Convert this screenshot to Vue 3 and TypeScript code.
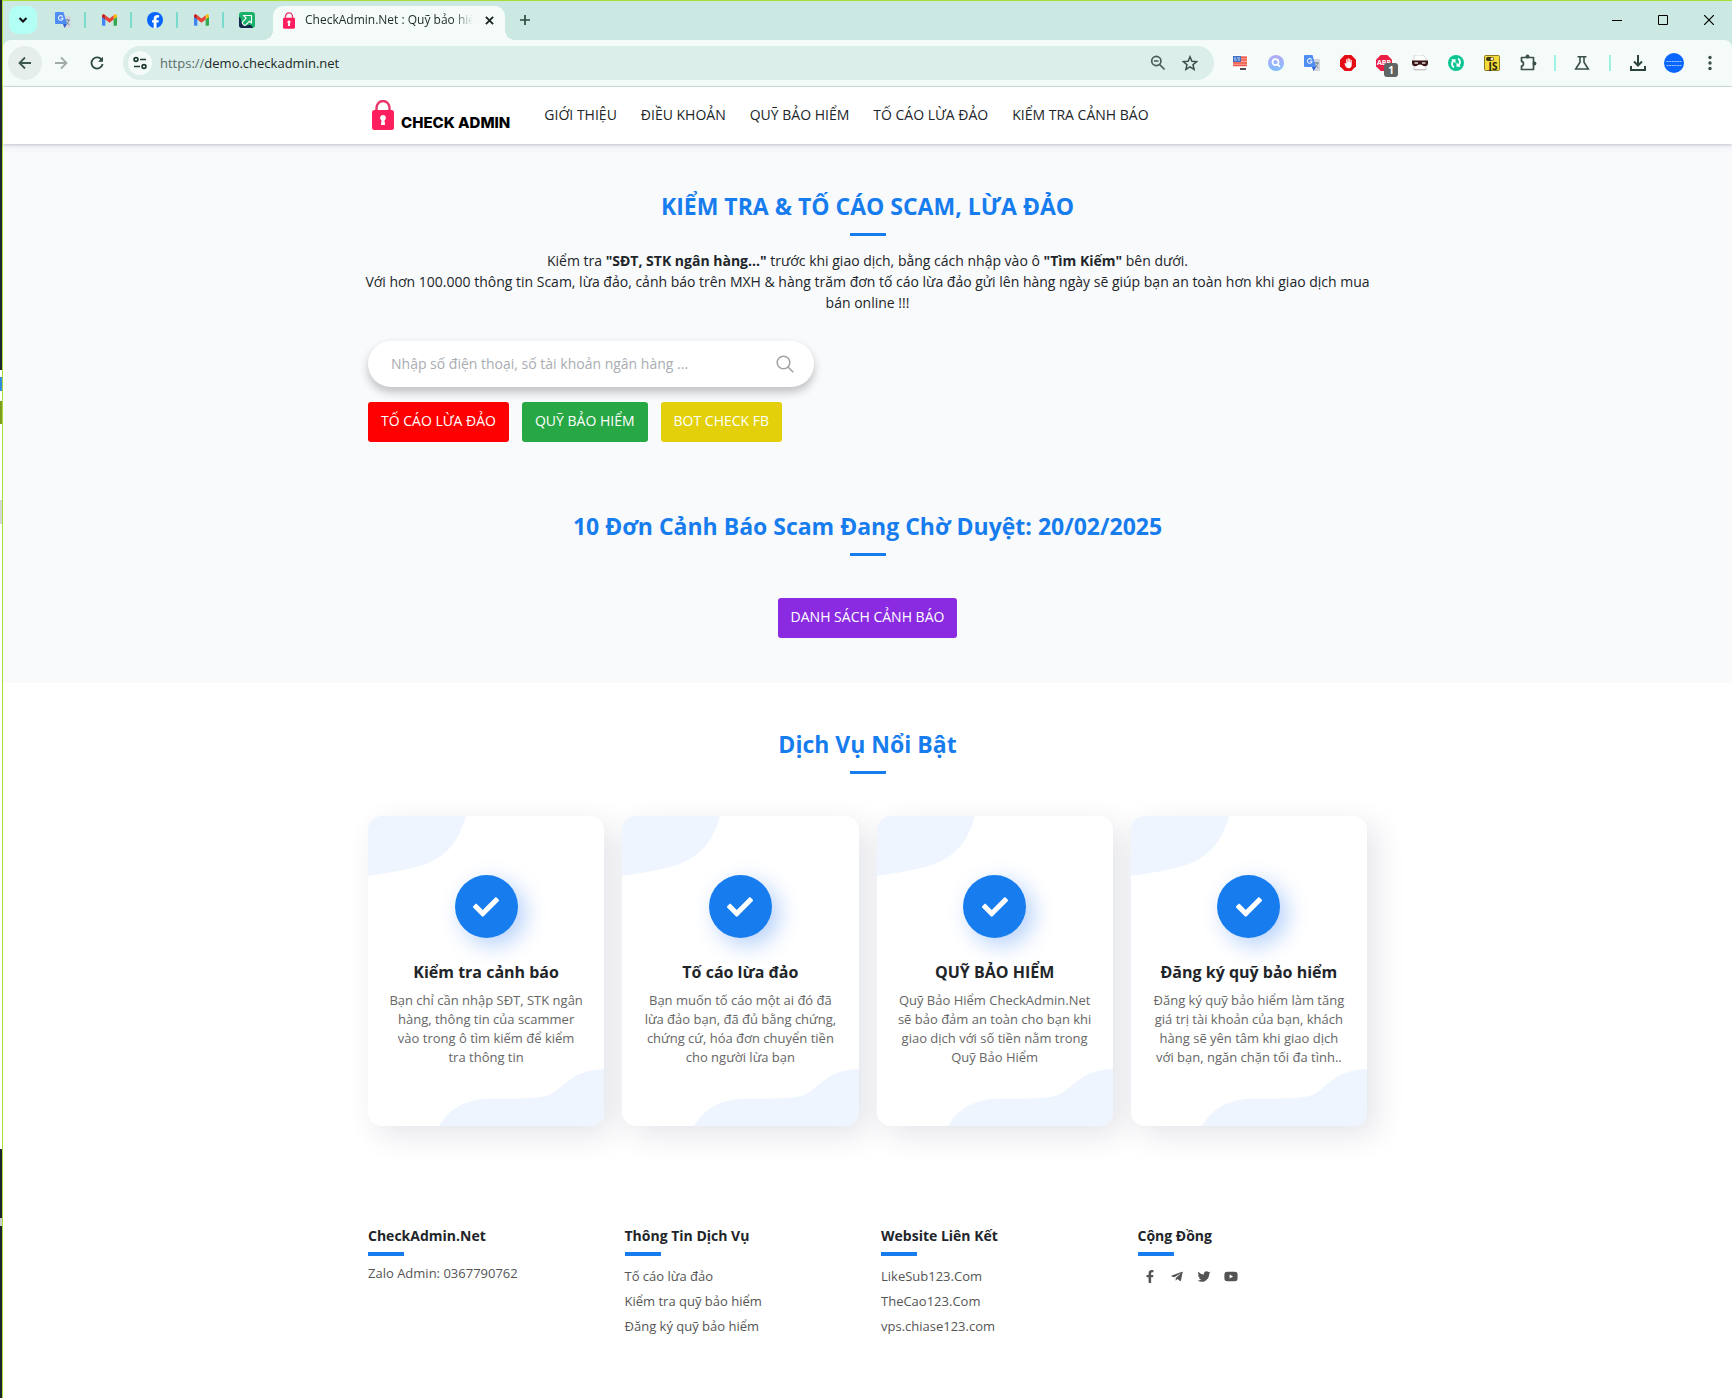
<script setup lang="ts">
import { ref } from 'vue'

interface LinkItem {
  label: string
  href: string
}

interface Service {
  title: string
  text: string
}

const query = ref('')

const navLinks: LinkItem[] = [
  { label: 'GIỚI THIỆU', href: '#gioi-thieu' },
  { label: 'ĐIỀU KHOẢN', href: '#dieu-khoan' },
  { label: 'QUỸ BẢO HIỂM', href: '#quy-bao-hiem' },
  { label: 'TỐ CÁO LỪA ĐẢO', href: '#to-cao' },
  { label: 'KIỂM TRA CẢNH BÁO', href: '#canh-bao' },
]

const services: Service[] = [
  {
    title: 'Kiểm tra cảnh báo',
    text: 'Bạn chỉ cần nhập SĐT, STK ngân hàng, thông tin của scammer vào trong ô tìm kiếm để kiểm tra thông tin',
  },
  {
    title: 'Tố cáo lừa đảo',
    text: 'Bạn muốn tố cáo một ai đó đã lừa đảo bạn, đã đủ bằng chứng, chứng cứ, hóa đơn chuyển tiền cho người lừa bạn',
  },
  {
    title: 'QUỸ BẢO HIỂM',
    text: 'Quỹ Bảo Hiểm CheckAdmin.Net sẽ bảo đảm an toàn cho bạn khi giao dịch với số tiền nằm trong Quỹ Bảo Hiểm',
  },
  {
    title: 'Đăng ký quỹ bảo hiểm',
    text: 'Đăng ký quỹ bảo hiểm làm tăng giá trị tài khoản của bạn, khách hàng sẽ yên tâm khi giao dịch với bạn, ngăn chặn tối đa tình..',
  },
]

const serviceLinks: LinkItem[] = [
  { label: 'Tố cáo lừa đảo', href: '#to-cao' },
  { label: 'Kiểm tra quỹ bảo hiểm', href: '#quy-bao-hiem' },
  { label: 'Đăng ký quỹ bảo hiểm', href: '#dang-ky' },
]

const partnerLinks: LinkItem[] = [
  { label: 'LikeSub123.Com', href: '#likesub' },
  { label: 'TheCao123.Com', href: '#thecao' },
  { label: 'vps.chiase123.com', href: '#vps' },
]

const socials = [
  {
    name: 'Facebook',
    box: '0 0 320 512',
    path: 'M279.14 288l14.22-92.66h-88.91v-60.13c0-25.35 12.42-50.06 52.24-50.06h40.42V6.26S260.43 0 225.36 0c-73.22 0-121.08 44.38-121.08 124.72v70.62H22.89V288h81.39v224h100.17V288z',
  },
  {
    name: 'Telegram',
    box: '0 0 448 512',
    path: 'M446.7 98.6l-67.6 318.8c-5.1 22.5-18.4 28.1-37.3 17.5l-103-75.9-49.7 47.8c-5.5 5.5-10.1 10.1-20.7 10.1l7.4-104.9 190.9-172.5c8.3-7.4-1.8-11.5-12.9-4.1L117.8 284 16.2 252.2c-22.1-6.9-22.5-22.1 4.6-32.7L418.2 66.4c18.4-6.9 34.5 4.1 28.5 32.2z',
  },
  {
    name: 'Twitter',
    box: '0 0 512 512',
    path: 'M459.37 151.716c.325 4.548.325 9.097.325 13.645 0 138.72-105.583 298.558-298.558 298.558-59.452 0-114.68-17.219-161.137-47.106 8.447.974 16.568 1.299 25.34 1.299 49.055 0 94.213-16.568 130.274-44.832-46.132-.975-84.792-31.188-98.112-72.772 6.498.974 12.995 1.624 19.818 1.624 9.421 0 18.843-1.3 27.614-3.573-48.081-9.747-84.143-51.98-84.143-102.985v-1.299c13.969 7.797 30.214 12.67 47.431 13.319-28.264-18.843-46.781-51.005-46.781-87.391 0-19.492 5.197-37.36 14.294-52.954 51.655 63.675 129.3 105.258 216.365 109.807-1.624-7.797-2.599-15.918-2.599-24.04 0-57.828 46.782-104.934 104.934-104.934 30.213 0 57.502 12.67 76.67 33.137 23.715-4.548 46.456-13.32 66.599-25.34-7.798 24.366-24.366 44.833-46.132 57.827 21.117-2.273 41.584-8.122 60.426-16.243-14.292 20.791-32.161 39.308-52.628 54.253z',
  },
  {
    name: 'YouTube',
    box: '0 0 576 512',
    path: 'M549.655 124.083c-6.281-23.65-24.787-42.276-48.284-48.597C458.781 64 288 64 288 64S117.22 64 74.629 75.486c-23.497 6.322-42.003 24.947-48.284 48.597-11.412 42.867-11.412 132.305-11.412 132.305s0 89.438 11.412 132.305c6.281 23.65 24.787 41.5 48.284 47.821C117.22 448 288 448 288 448s170.78 0 213.371-11.486c23.497-6.321 42.003-24.171 48.284-47.821 11.412-42.867 11.412-132.305 11.412-132.305s0-89.438-11.412-132.305zm-317.51 213.508V175.185l142.739 81.205-142.739 81.201z',
  },
]

const pinnedTabs = ['translate', 'gmail', 'facebook', 'gmail', 'arrow']
</script>

<template>
  <div class="desktop">
    <!-- Shared symbols -->
    <svg class="symbols" aria-hidden="true">
      <symbol id="i-translate" viewBox="0 0 16 16">
        <path d="M6 4h9a1 1 0 0 1 1 1v10a1 1 0 0 1-1 1H9.500z" fill="#d3d7db" />
        <path d="M9.800 8h5M12.300 7v1M14 8c-.5 2-2 3.500-3.500 4.500M11 9.500c.8 1.500 2 2.600 3.300 3.200" stroke="#6d8398" stroke-width="1" fill="none" />
        <path d="M1 0h7.500l3.400 12H1a1 1 0 0 1-1-1V1a1 1 0 0 1 1-1z" fill="#4f8df5" />
        <path d="M8 12h4l-2.500 4z" fill="#2f5fd0" />
        <path d="M7.600 4.600A2.300 2.300 0 1 0 8 6.300H5.900" stroke="#eaf1ff" stroke-width="1.100" fill="none" />
      </symbol>
      <symbol id="i-gmail" viewBox="0 0 16 12">
        <path d="M0 2v9a1 1 0 0 0 1 1h2.600V4.500z" fill="#4285f4" />
        <path d="M16 2v9a1 1 0 0 1-1 1h-2.600V4.500z" fill="#34a853" />
        <path d="M12.400 1v4.500L16 2.800V1.600C16 .2 14.500-.5 13.300.4z" fill="#fbbc04" />
        <path d="M3.600 5.500V1L8 4.300 12.400 1v4.500L8 8.800z" fill="#ea4335" />
        <path d="M0 1.600v1.200l3.600 2.700V1L2.700.4C1.500-.5 0 .2 0 1.600z" fill="#c5221f" />
      </symbol>
      <symbol id="i-facebook" viewBox="0 0 16 16">
        <circle cx="8" cy="8" r="8" fill="#0866ff" />
        <path d="M6.700 16v-5.400H5V8.200h1.700V7.100c0-2.700 1.200-4 3.900-4 .5 0 1.100.1 1.500.2v2.200h-.9c-1.200 0-1.700.5-1.700 1.700v1h2.400l-.4 2.400h-2V16z" fill="#fff" />
      </symbol>
      <symbol id="i-arrow" viewBox="0 0 16 16">
        <rect width="16" height="16" rx="3" fill="#18b26b" />
        <path d="M0 5c2 0 2 4 3 6s4 3 6 2 4 0 5 3H3a3 3 0 0 1-3-3z" fill="#15294a" />
        <path d="M4.500 3.500h8v7.500l-2-1.800-3.600 3.600a1.500 1.500 0 0 1-2.200 0l-.9-.9a1.500 1.500 0 0 1 0-2.200l3.400-3.500z" fill="none" stroke="#fff" stroke-width="1.200" stroke-linejoin="round" />
      </symbol>
      <symbol id="i-lock" viewBox="0 0 22 30">
        <path d="M4.500 12V8a6.500 7 0 0 1 13 0v4" fill="none" stroke="#e9366a" stroke-width="2.400" />
        <rect y="10" width="22" height="20" rx="2.500" fill="#ff1f5e" />
        <path d="M11 15a2.900 2.900 0 0 1 1.500 5.400l.6 4.600H8.900l.6-4.600A2.900 2.900 0 0 1 11 15z" fill="#fff" />
      </symbol>
    </svg>

    <div class="desktop-edge" aria-hidden="true"></div>

    <div class="window">
      <div class="tab-strip">
        <button class="tab-search" type="button" aria-label="Tìm thẻ">
          <svg width="10" height="10" viewBox="0 0 10 10"><path d="M1.500 3L5 6.500 8.500 3" fill="none" stroke="#111" stroke-width="2" /></svg>
        </button>
        <div class="pinned">
          <button v-for="(icon, i) in pinnedTabs" :key="i" class="pinned-tab" type="button" :aria-label="icon">
            <svg :width="icon === 'gmail' ? 15 : 16" :height="icon === 'gmail' ? 12 : 16"><use :href="'#i-' + icon" /></svg>
          </button>
        </div>
        <div class="active-tab">
          <svg width="12" height="17"><use href="#i-lock" /></svg>
          <span class="tab-title">CheckAdmin.Net : Quỹ bảo hiểm</span>
          <button class="tab-close" type="button" aria-label="Đóng thẻ">
            <svg width="9" height="9" viewBox="0 0 10 10"><path d="M1 1l8 8M9 1L1 9" stroke="#1c2423" stroke-width="2" /></svg>
          </button>
        </div>
        <button class="new-tab" type="button" aria-label="Thẻ mới">
          <svg width="12" height="12" viewBox="0 0 12 12"><path d="M6 1v10M1 6h10" stroke="#2c4a43" stroke-width="1.700" /></svg>
        </button>
        <div class="window-controls">
          <button type="button" aria-label="Thu nhỏ"><svg width="10" height="10" viewBox="0 0 10 10"><path d="M0 5.500h10" stroke="#000" /></svg></button>
          <button type="button" aria-label="Phóng to"><svg width="10" height="10" viewBox="0 0 10 10"><path d="M.5.500h9v9h-9z" fill="none" stroke="#000" /></svg></button>
          <button type="button" aria-label="Đóng"><svg width="10" height="10" viewBox="0 0 10 10"><path d="M0 0l10 10M10 0L0 10" stroke="#000" stroke-width="1.200" /></svg></button>
        </div>
      </div>

      <div class="toolbar-back">
        <div class="toolbar">
          <button class="nav-button current" type="button" aria-label="Quay lại">
            <svg width="14" height="14" viewBox="0 0 14 14"><path d="M13 7H2M7 1.500L1.500 7 7 12.500" fill="none" stroke="#3b5750" stroke-width="1.800" /></svg>
          </button>
          <button class="nav-button" type="button" aria-label="Tiến">
            <svg width="14" height="14" viewBox="0 0 14 14"><path d="M1 7h11M7 1.500L12.500 7 7 12.500" fill="none" stroke="#a0aaa8" stroke-width="1.800" /></svg>
          </button>
          <button class="nav-button" type="button" aria-label="Tải lại">
            <svg width="14" height="14" viewBox="0 0 14 14"><path d="M12 4.200A5.600 5.600 0 1 0 12.600 8" fill="none" stroke="#2f4a43" stroke-width="1.800" /><path d="M13 .8v5H8z" fill="#2f4a43" /></svg>
          </button>

          <div class="omnibox">
            <button class="site-info" type="button" aria-label="Thông tin trang">
              <svg width="14" height="14" viewBox="0 0 14 14" fill="none" stroke="#1f3a33" stroke-width="1.700"><circle cx="3" cy="3.500" r="1.900" /><path d="M7 3.500h6M1 10.500h6" /><circle cx="11" cy="10.500" r="1.900" /></svg>
            </button>
            <a class="url" href="https://demo.checkadmin.net"><span class="scheme">https://</span>demo.checkadmin.net</a>
            <button class="omni-action" type="button" aria-label="Thu phóng">
              <svg width="16" height="16" viewBox="0 0 16 16" fill="none" stroke="#4c5a57" stroke-width="1.700"><circle cx="6.300" cy="6" r="4.600" /><path d="M4 6h4.500M9.600 9.500l5 5" /></svg>
            </button>
            <button class="omni-action" type="button" aria-label="Đánh dấu trang">
              <svg width="16" height="16" viewBox="0 0 16 16" fill="none" stroke="#3e4d4a" stroke-width="1.500"><path d="M8 1.800l1.900 4.400 4.700.4-3.600 3.100 1.100 4.700L8 11.900l-4.100 2.500L5 9.700 1.400 6.600l4.700-.4z" /></svg>
            </button>
          </div>

          <div class="extensions">
            <button class="ext" type="button" aria-label="Từ điển">
              <svg width="16" height="16" viewBox="0 0 16 16"><rect width="16" height="16" fill="#fff" /><rect x="1" y="1" width="14" height="10" fill="#f7a59b" /><path d="M9 2.500h6M9 5h6M1 8h14M1 10.500h14" stroke="#ee5a4c" stroke-width="1.300" /><rect x="1" y="1" width="8" height="6" fill="#3f6fc4" /><path d="M2 3h2M5 3h3M2 5h3M6 5h2" stroke="#c8d8f4" /><path d="M8 14h6" stroke="#222" stroke-width="1.600" /></svg>
            </button>
            <button class="ext" type="button" aria-label="Tìm kiếm">
              <svg width="16" height="16" viewBox="0 0 16 16"><defs><linearGradient id="g-search" x1="0" y1="0" x2="0" y2="1"><stop offset="0" stop-color="#b3a9f7" /><stop offset="1" stop-color="#7fbcfb" /></linearGradient></defs><circle cx="8" cy="8" r="8" fill="url(#g-search)" /><circle cx="7.500" cy="7.200" r="3" fill="none" stroke="#fff" stroke-width="1.700" /><path d="M9.700 9.400l2.300 2.400" stroke="#fff" stroke-width="1.700" /></svg>
            </button>
            <button class="ext" type="button" aria-label="Dịch"><svg width="16" height="16"><use href="#i-translate" /></svg></button>
            <button class="ext" type="button" aria-label="AdBlock">
              <svg width="16" height="16" viewBox="0 0 16 16"><path d="M4.700 0h6.600L16 4.700v6.600L11.300 16H4.700L0 11.300V4.700z" fill="#e40d13" /><path d="M4.400 8.500l.8-.5 1 1V4.200h1.100V7h.4V3.200h1.100V7h.4V3.700h1.100v3.600h.4V5h1v5c0 2-1 3.200-3 3.200-1.800 0-2.600-.8-3.300-2.200z" fill="#fff" /></svg>
            </button>
            <button class="ext" type="button" aria-label="Adblock Plus">
              <svg width="16" height="16" viewBox="0 0 16 16"><path d="M4.700 0h6.600L16 4.700v6.600L11.300 16H4.700L0 11.300V4.700z" fill="#ed1e45" /><text x="8" y="10" text-anchor="middle" font-size="7" class="icon-text" fill="#fff">ABP</text></svg>
              <span class="ext-badge">1</span>
            </button>
            <button class="ext" type="button" aria-label="Ẩn danh">
              <svg width="16" height="16" viewBox="0 0 16 16"><path d="M2 0h9l3 3v11.500H2z" fill="#fff" stroke="#ccc" stroke-width=".8" /><path d="M2 14.800h12" stroke="#bbb" /><path d="M0 5.500h16v2.800c0 1.600-1.200 2.900-3 2.900-2.300 0-3.300-1.700-5-1.700s-2.700 1.700-5 1.700c-1.800 0-3-1.300-3-2.900z" fill="#3a1618" /><path d="M2.500 8h3.500M10 8h3.500" stroke="#e6dddd" stroke-width="1.600" /></svg>
            </button>
            <button class="ext" type="button" aria-label="Đồng bộ">
              <svg width="16" height="16" viewBox="0 0 16 16"><circle cx="8" cy="8" r="8" fill="#0dc593" /><path d="M5.800 12.500C3.500 10.500 3.500 7.500 5.500 5.500M10.200 3.500c2.300 2 2.300 5 .3 7" fill="none" stroke="#fff" stroke-width="1.900" /><path d="M3.200 4.200h4.300v4.300zM12.800 11.800H8.500V7.500z" fill="#fff" /></svg>
            </button>
            <button class="ext" type="button" aria-label="JavaScript">
              <svg width="16" height="16" viewBox="0 0 16 16"><rect x=".5" y=".5" width="15" height="15" rx="1" fill="#f3d93a" stroke="#8a7a24" /><rect x="2" y="2" width="8" height="4" rx="2" fill="#3a3519" /><circle cx="8" cy="4" r="1.400" fill="#f6eec0" /><text x="9" y="14.500" text-anchor="middle" font-size="10" class="icon-text" fill="#26220c">JS</text></svg>
            </button>
            <button class="ext" type="button" aria-label="Tiện ích">
              <svg width="18" height="18" viewBox="0 0 18 18"><path d="M2.500 3.500h12v12h-12v-3.300c2.600-.4 2.600-4.400 0-4.800z" fill="none" stroke="#3b4f4a" stroke-width="1.700" stroke-linejoin="round" /><circle cx="8.500" cy="2.500" r="1.900" fill="#3b4f4a" /><circle cx="15.500" cy="9.500" r="1.900" fill="#3b4f4a" /></svg>
            </button>
            <span class="divider"></span>
            <button class="ext" type="button" aria-label="Thử nghiệm">
              <svg width="16" height="16" viewBox="0 0 16 16" fill="none" stroke="#3b4f4a" stroke-width="1.600"><path d="M3.500 1.800h9M6 2v5.200L1.700 14h12.600L10 7.200V2" /></svg>
            </button>
            <span class="divider wide"></span>
            <button class="ext" type="button" aria-label="Tải xuống">
              <svg width="16" height="16" viewBox="0 0 16 16" fill="none" stroke="#2d443e" stroke-width="2"><path d="M8 0v10M4 6.500l4 4 4-4M1 11v4h14v-4" /></svg>
            </button>
            <button class="ext" type="button" aria-label="Hồ sơ">
              <svg width="20" height="20" viewBox="0 0 20 20"><circle cx="10" cy="10" r="10" fill="#0866ff" /><path d="M2.500 8.500h15M2.500 12.500h15" stroke="#9fc4ff" stroke-dasharray="2 .6" /></svg>
            </button>
            <button class="ext" type="button" aria-label="Menu">
              <svg width="4" height="16" viewBox="0 0 4 16" fill="#3b4f4a"><circle cx="2" cy="2.500" r="1.700" /><circle cx="2" cy="8" r="1.700" /><circle cx="2" cy="13.500" r="1.700" /></svg>
            </button>
          </div>
        </div>
      </div>

      <header class="site-header">
        <div class="container header-row">
          <a class="logo" href="#top"><svg width="22" height="30"><use href="#i-lock" /></svg><span>CHECK ADMIN</span></a>
          <nav class="site-nav">
            <a v-for="link in navLinks" :key="link.label" :href="link.href">{{ link.label }}</a>
          </nav>
        </div>
      </header>

      <main>
        <section class="hero">
          <div class="container">
            <h2 class="heading">KIỂM TRA &amp; TỐ CÁO SCAM, LỪA ĐẢO</h2>
            <p class="intro">
              Kiểm tra <strong>"SĐT, STK ngân hàng..."</strong> trước khi giao dịch, bằng cách nhập vào ô <strong>"Tìm Kiếm"</strong> bên dưới.<br />
              Với hơn 100.000 thông tin Scam, lừa đảo, cảnh báo trên MXH &amp; hàng trăm đơn tố cáo lừa đảo gửi lên hàng ngày sẽ giúp bạn an toàn hơn khi giao dịch mua bán online !!!
            </p>
            <form class="search" role="search" @submit.prevent>
              <input v-model="query" type="search" aria-label="Tìm kiếm" placeholder="Nhập số điện thoại, số tài khoản ngân hàng ..." />
              <button type="submit" aria-label="Tìm">
                <svg width="18" height="18" viewBox="0 0 18 18" fill="none" stroke="#a3a3a3" stroke-width="1.600" stroke-linecap="round"><circle cx="7.500" cy="7.500" r="6.300" /><path d="M12 12l4.800 4.800" /></svg>
              </button>
            </form>
            <div class="actions">
              <a class="btn red" href="#to-cao">TỐ CÁO LỪA ĐẢO</a>
              <a class="btn green" href="#quy-bao-hiem">QUỸ BẢO HIỂM</a>
              <a class="btn yellow" href="#bot">BOT CHECK FB</a>
            </div>

            <h2 class="heading pending">10 Đơn Cảnh Báo Scam Đang Chờ Duyệt: 20/02/2025</h2>
            <div class="pending-action">
              <a class="btn purple" href="#danh-sach">DANH SÁCH CẢNH BÁO</a>
            </div>
          </div>
        </section>

        <section class="services">
          <div class="container">
            <h2 class="heading">Dịch Vụ Nổi Bật</h2>
            <div class="cards">
              <article v-for="service in services" :key="service.title" class="card">
                <svg class="blob top" width="98" height="60" viewBox="0 0 98 60"><path d="M0 0h98C88 36 68 47 40 53 22 57 10 58 0 60z" fill="#eef5ff" /></svg>
                <svg class="blob bottom" width="165" height="57" viewBox="0 0 165 57"><path d="M0 57C10 40 26 30 52 29.500c20-.3 36 .5 50-1.500C124 26 126 1 165 0v57z" fill="#eef5ff" /></svg>
                <span class="check">
                  <svg width="26" height="26" viewBox="0 0 512 512"><path fill="#fff" d="M173.898 439.404l-166.400-166.400c-9.997-9.997-9.997-26.206 0-36.204l36.203-36.204c9.997-9.998 26.207-9.998 36.204 0L192 312.690 432.095 72.596c9.997-9.997 26.207-9.997 36.204 0l36.203 36.204c9.997 9.997 9.997 26.206 0 36.204l-294.400 294.401c-9.998 9.997-26.207 9.997-36.204-.001z" /></svg>
                </span>
                <h3>{{ service.title }}</h3>
                <p>{{ service.text }}</p>
              </article>
            </div>
          </div>
        </section>
      </main>

      <footer class="site-footer">
        <div class="container footer-grid">
          <div>
            <h4>CheckAdmin.Net</h4>
            <p>Zalo Admin: 0367790762</p>
          </div>
          <div>
            <h4>Thông Tin Dịch Vụ</h4>
            <ul>
              <li v-for="link in serviceLinks" :key="link.label"><a :href="link.href">{{ link.label }}</a></li>
            </ul>
          </div>
          <div>
            <h4>Website Liên Kết</h4>
            <ul>
              <li v-for="link in partnerLinks" :key="link.label"><a :href="link.href">{{ link.label }}</a></li>
            </ul>
          </div>
          <div>
            <h4>Cộng Đồng</h4>
            <div class="socials">
              <a v-for="s in socials" :key="s.name" href="#" :aria-label="s.name">
                <svg width="14" height="13" :viewBox="s.box"><path :d="s.path" fill="#545454" /></svg>
              </a>
            </div>
          </div>
        </div>
      </footer>
    </div>
  </div>
</template>

<style>
body {
  margin: 0;
  background: #fff;
}
</style>

<style scoped>
.desktop {
  display: flex;
  min-height: 100vh;
  font-family: "Open Sans", "Noto Sans", sans-serif;
  color: #212529;
}

.desktop *,
.desktop *::before,
.desktop *::after {
  box-sizing: border-box;
}

.symbols {
  position: absolute;
  width: 0;
  height: 0;
}

svg {
  display: block;
  flex: none;
}

button {
  display: flex;
  align-items: center;
  justify-content: center;
  padding: 0;
  border: 0;
  background: none;
  font: inherit;
}

a {
  color: inherit;
  text-decoration: none;
}

.desktop-edge {
  flex: none;
  width: 2px;
  background: linear-gradient(
    #1e2430 370px, #fff 370px, #fff 377px, #2f8ae0 377px, #2f8ae0 391px,
    #fff 391px, #fff 401px, #7b9f1c 401px, #7b9f1c 424px, #fff 424px,
    #fff 500px, #d4d6da 500px, #d4d6da 524px, #fff 524px,
    #fff 1149px, #1b2231 1149px, #1b2231 1218px, #ccc 1218px, #ccc 1226px, #1b2231 1226px
  );
}

.window {
  flex: 1;
  min-width: 0;
  border-top: 1px solid #a9dc35;
  border-left: 1px solid #a9dc35;
  background: #fff;
}

/* Browser tab strip */
.tab-strip {
  display: flex;
  align-items: center;
  height: 39px;
  padding-bottom: 1px;
  background: #cce8e2;
}

.tab-search {
  width: 28px;
  height: 28px;
  margin-left: 6px;
  border-radius: 9px;
  background: #b2fff4;
}

.pinned {
  display: flex;
  margin-left: 3px;
}

.pinned-tab {
  width: 46px;
  height: 16px;
  padding-left: 2px;
  border-right: 2px solid #78dccb;
}

.pinned-tab:last-child {
  border-right-color: transparent;
}

.active-tab {
  position: relative;
  display: flex;
  align-items: center;
  gap: 10px;
  width: 232px;
  height: 34px;
  margin: 0 0 -5px 3px;
  padding: 0 10px 5px;
  border-radius: 10px 10px 0 0;
  background: #f5fbf9;
}

.active-tab::before,
.active-tab::after {
  content: "";
  position: absolute;
  bottom: 0;
  width: 10px;
  height: 10px;
}

.active-tab::before {
  right: 100%;
  background: radial-gradient(circle at 0 0, transparent 10px, #f5fbf9 10px);
}

.active-tab::after {
  left: 100%;
  background: radial-gradient(circle at 100% 0, transparent 10px, #f5fbf9 10px);
}

.tab-title {
  flex: 1;
  overflow: hidden;
  font-size: 12px;
  line-height: 18px;
  white-space: nowrap;
  color: #1d2b28;
  mask-image: linear-gradient(to right, #000 88%, transparent);
}

.tab-close {
  width: 12px;
  height: 16px;
}

.new-tab {
  width: 28px;
  height: 28px;
  margin-left: 6px;
}

.window-controls {
  display: flex;
  margin-left: auto;
}

.window-controls button {
  width: 46px;
  height: 38px;
}

/* Browser toolbar */
.toolbar-back {
  background: #cce8e2;
}

.toolbar {
  display: flex;
  align-items: center;
  height: 47px;
  padding: 0 4px 0 5px;
  border-bottom: 1px solid #d5e3df;
  border-radius: 8px 8px 0 0;
  background: #f5fbf9;
}

.nav-button {
  width: 34px;
  height: 34px;
  margin-right: 2px;
  border-radius: 50%;
}

.nav-button.current {
  background: #e6eeec;
}

.omnibox {
  display: flex;
  flex: 1;
  align-items: center;
  height: 34px;
  margin: 0 8px 0 7px;
  padding: 0 8px 0 5px;
  border-radius: 17px;
  background: #dbeeea;
}

.site-info {
  width: 24px;
  height: 24px;
  border-radius: 50%;
  background: #f5fbf9;
}

.url {
  flex: 1;
  margin-left: 8px;
  font-size: 13px;
  line-height: 20px;
  color: #1c2826;
}

.scheme {
  color: #5a6c68;
}

.omni-action {
  width: 32px;
  height: 32px;
}

.extensions {
  display: flex;
  align-items: center;
}

.ext {
  position: relative;
  width: 36px;
  height: 34px;
}

.icon-text {
  font-family: "Open Sans", sans-serif;
  font-weight: 700;
}

.ext-badge {
  position: absolute;
  left: 18px;
  top: 17px;
  width: 14px;
  height: 14px;
  border-radius: 3px;
  background: #606463;
  color: #fff;
  font-size: 10px;
  font-weight: 700;
  line-height: 14px;
  text-align: center;
}

.divider {
  width: 2px;
  height: 16px;
  margin: 0 8px;
  background: #9cf3e3;
}

.divider.wide {
  margin: 0 9px;
}

/* Site header */
.container {
  width: 999px;
  max-width: calc(100% - 26px);
  margin: 0 auto;
}

.site-header {
  position: relative;
  z-index: 1;
  background: #fff;
  box-shadow: 0 1px 3px rgba(60, 70, 100, 0.25), 0 3px 8px rgba(60, 70, 100, 0.07);
}

.header-row {
  display: flex;
  align-items: center;
  height: 57px;
  padding-bottom: 1px;
}

.logo {
  display: flex;
  align-items: flex-end;
  gap: 7px;
  margin: 0 34px 0 4px;
  font-family: Inter, sans-serif;
  font-size: 15px;
  font-weight: 800;
  line-height: 15px;
  color: #000;
}

.site-nav {
  display: flex;
  gap: 24px;
  font-size: 14px;
  font-weight: 500;
  line-height: 20px;
}

/* Hero */
.hero {
  padding: 47px 0 45px;
  background: #f9fafc;
}

.heading {
  margin: 0;
  color: #177dee;
  font-size: 23px;
  font-weight: 700;
  line-height: 30px;
  text-align: center;
}

.heading::after {
  content: "";
  display: block;
  width: 36px;
  height: 3px;
  margin: 12px auto 0;
  background: #177dee;
}

.intro {
  margin: 14px -8px 28px;
  font-size: 14px;
  line-height: 21px;
  text-align: center;
}

.search {
  display: flex;
  align-items: center;
  width: 446px;
  max-width: 100%;
  height: 46px;
  padding: 0 20px 0 23px;
  border-radius: 23px;
  background: #fff;
  box-shadow: 0 5px 10px rgba(0, 0, 0, 0.24);
}

.search input {
  flex: 1;
  min-width: 0;
  padding: 0;
  border: 0;
  outline: 0;
  background: none;
  font: inherit;
  font-size: 14px;
  line-height: 20px;
}

.search input::placeholder {
  color: #a9adb2;
  opacity: 1;
}

.actions {
  display: flex;
  gap: 13px;
  margin-top: 15px;
}

.btn {
  height: 40px;
  padding: 9px 13px 11px;
  border-radius: 3px;
  color: #fff;
  font-size: 14px;
  font-weight: 500;
  line-height: 20px;
}

.red { background: #fe0000; }
.green { background: #28a745; }
.yellow { background: #e4d00a; }
.purple { background: #8a2be2; }

.pending {
  margin-top: 69px;
}

.pending-action {
  display: flex;
  justify-content: center;
  margin-top: 42px;
}

/* Services */
.services {
  padding: 46px 0 100px;
}

.cards {
  display: grid;
  grid-template-columns: repeat(4, 1fr);
  gap: 18px;
  margin-top: 42px;
}

.card {
  position: relative;
  display: flex;
  flex-direction: column;
  align-items: center;
  padding: 59px 20px;
  border-radius: 14px;
  background: #fff;
  box-shadow: 9px 9px 30px rgba(30, 40, 80, 0.12);
  text-align: center;
  overflow: hidden;
}

.blob {
  position: absolute;
}

.blob.top {
  left: 0;
  top: 0;
}

.blob.bottom {
  right: 0;
  bottom: 0;
}

.check {
  position: relative;
  display: flex;
  align-items: center;
  justify-content: center;
  width: 63px;
  height: 63px;
  border-radius: 50%;
  background: #177dee;
  box-shadow: 7px 7px 22px rgba(23, 110, 238, 0.32);
}

.card h3 {
  margin: 22px 0 7px;
  font-size: 16px;
  font-weight: 700;
  line-height: 24px;
  color: #212529;
}

.card p {
  position: relative;
  margin: 0;
  font-size: 13px;
  line-height: 19px;
  color: #666;
}

/* Footer */
.footer-grid {
  display: grid;
  grid-template-columns: repeat(4, 1fr);
  gap: 27px;
  padding-bottom: 50px;
  font-size: 13px;
  line-height: 19px;
  color: #555;
}

.footer-grid h4 {
  margin: 0 0 8px;
  font-size: 14px;
  font-weight: 700;
  line-height: 20px;
  color: #212529;
}

.footer-grid h4::after {
  content: "";
  display: block;
  width: 36px;
  height: 4px;
  margin-top: 6px;
  background: #177dee;
}

.footer-grid p {
  margin: 0;
}

.footer-grid ul {
  display: flex;
  flex-direction: column;
  gap: 6px;
  margin: 11px 0 0;
  padding: 0;
  list-style: none;
}

.socials {
  display: flex;
  gap: 13px;
  margin: 14px 0 0 5px;
}
</style>
